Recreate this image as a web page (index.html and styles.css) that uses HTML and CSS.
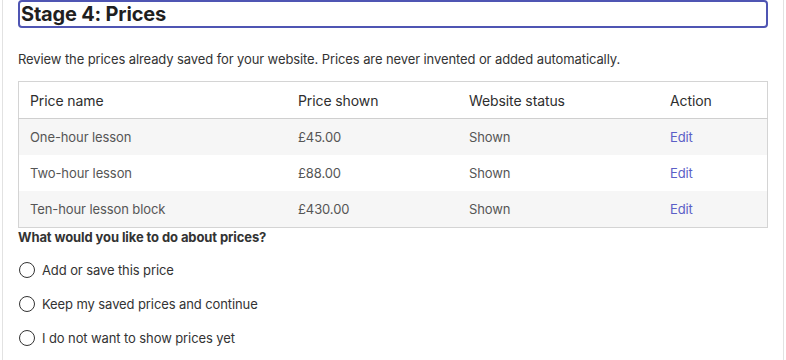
FILE: index.html
```html
<!DOCTYPE html>
<html lang="en">
<head>
    <meta charset="UTF-8">
    <meta name="viewport" content="width=device-width, initial-scale=1.0">
    <title>Stage 4: Prices</title>
    <link rel="stylesheet" href="styles.css">
</head>
<body>
    <div class="panel">
        <h2 class="stage-title" tabindex="-1">Stage 4: Prices</h2>
        <p class="intro">Review the prices already saved for your website. Prices are never invented or added automatically.</p>

        <table class="prices">
            <thead>
                <tr>
                    <th class="col-name">Price name</th>
                    <th class="col-price">Price shown</th>
                    <th class="col-status">Website status</th>
                    <th class="col-action">Action</th>
                </tr>
            </thead>
            <tbody>
                <tr>
                    <td>One-hour lesson</td>
                    <td>£45.00</td>
                    <td>Shown</td>
                    <td><a href="#">Edit</a></td>
                </tr>
                <tr>
                    <td>Two-hour lesson</td>
                    <td>£88.00</td>
                    <td>Shown</td>
                    <td><a href="#">Edit</a></td>
                </tr>
                <tr>
                    <td>Ten-hour lesson block</td>
                    <td>£430.00</td>
                    <td>Shown</td>
                    <td><a href="#">Edit</a></td>
                </tr>
            </tbody>
        </table>

        <fieldset class="choices">
            <legend>What would you like to do about prices?</legend>
            <label class="choice"><input type="radio" name="price-action"> Add or save this price</label>
            <label class="choice"><input type="radio" name="price-action"> Keep my saved prices and continue</label>
            <label class="choice"><input type="radio" name="price-action"> I do not want to show prices yet</label>
        </fieldset>
    </div>
</body>
</html>
```

FILE: styles.css
```css
body {
    margin: 0;
    font-family: Inter, "Liberation Sans", Arial, sans-serif;
    color: #333;
    background: #fff;
    letter-spacing: -0.1px;
}

.panel {
    margin: -10px 2px 0 2px;
    padding: 10px 15px 0 15px;
    border-left: 1px solid #e2e2e2;
    border-right: 1px solid #e2e2e2;
    min-height: 370px;
    box-sizing: border-box;
}

.stage-title {
    margin: 0;
    font-size: 20px;
    font-weight: 700;
    color: #1f1f1f;
    line-height: 24px;
    padding: 0 0 0 1px;
    border: 2px solid #4f55b3;
    border-radius: 4px;
    letter-spacing: -0.2px;
}

.intro {
    margin: 22px 0 13px 0;
    font-size: 13px;
    line-height: 18px;
    color: #333;
}

.prices {
    width: 100%;
    border-collapse: collapse;
    border: 1px solid #d4d4d4;
    font-size: 13px;
}

.prices th {
    text-align: left;
    font-weight: 400;
    font-size: 14px;
    color: #2e2e2e;
    height: 36px;
    padding: 0 11px;
    border-bottom: 1px solid #cfcfcf;
}

.prices td {
    height: 36px;
    padding: 0 11px;
    color: #555;
}

.prices tbody tr:nth-child(odd) td {
    background: #f6f6f6;
}

.col-name { width: 246px; }
.col-price { width: 149px; }
.col-status { width: 179px; }

.prices a {
    color: #5b5fc7;
    text-decoration: none;
}

.choices {
    border: 0;
    margin: 0;
    padding: 0;
}

.choices legend {
    padding: 0;
    margin-top: 3px;
    font-size: 13px;
    font-weight: 700;
    color: #333;
    line-height: 18px;
}

.choice {
    display: flex;
    align-items: center;
    gap: 7px;
    font-size: 13px;
    color: #333;
    margin-top: 15px;
    line-height: 18px;
}

.choice + .choice {
    margin-top: 16px;
}

.choice input {
    appearance: none;
    box-sizing: border-box;
    margin: 0 0 0 1px;
    width: 16px;
    height: 16px;
    border: 1.5px solid #333;
    border-radius: 50%;
    background: #fff;
}
```
